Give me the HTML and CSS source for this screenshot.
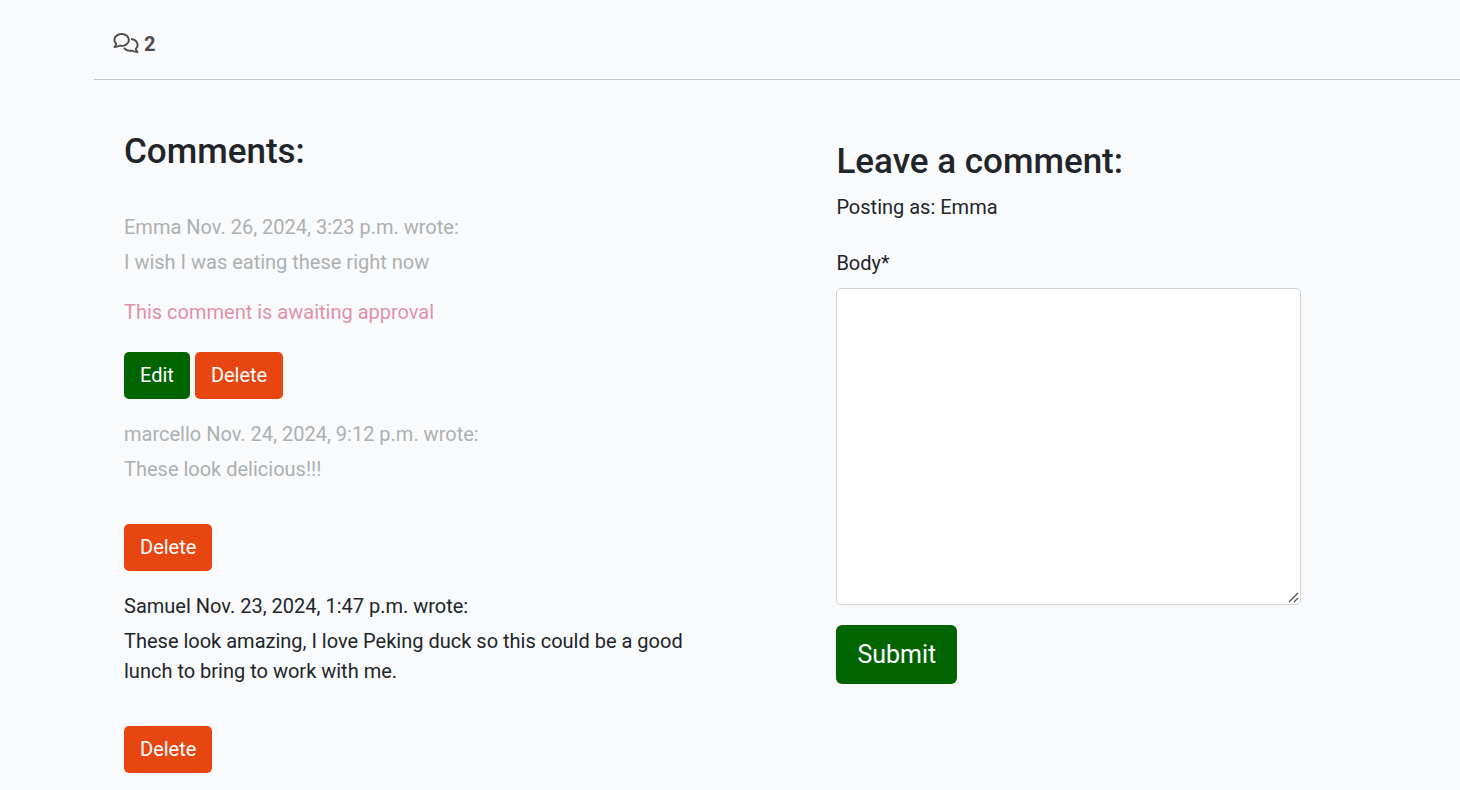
FILE: index.html
```html
<!DOCTYPE html>
<html lang="en">
<head>
<meta charset="utf-8">
<meta name="viewport" content="width=device-width, initial-scale=1">
<title>Comments</title>
<link rel="stylesheet" href="styles.css">
</head>
<body>
<main class="post">
  <div class="comment-count">
    <svg class="count-icon" viewBox="0 0 640 512" aria-hidden="true"><path d="M88.2 309.1c9.8-18.3 6.8-40.8-7.5-55.8C59.4 230.9 48 204 48 176c0-63.5 63.8-128 160-128s160 64.5 160 128s-63.8 128-160 128c-13.1 0-25.8-1.3-37.8-3.6c-10.4-2-21.2-.6-30.7 4.2c-4.1 2.1-8.3 4.1-12.6 6c-16 7.2-32.9 13.5-49.9 18c2.8-4.6 5.4-9.1 7.9-13.6c1.1-1.9 2.2-3.9 3.2-5.9zM208 352c114.9 0 208-78.8 208-176S322.9 0 208 0S0 78.8 0 176c0 41.8 17.2 80.1 45.9 110.3c-.9 1.7-1.9 3.5-2.8 5.1c-10.3 18.4-22.3 36.5-36.6 52.1c-6.6 7-8.3 17.2-4.6 25.9C5.8 378.3 14.4 384 24 384c43 0 86.5-13.3 122.7-29.7c4.8-2.2 9.6-4.5 14.2-6.8c15.1 3 30.9 4.5 47.1 4.5zM432 480c16.2 0 31.9-1.6 47.1-4.5c4.6 2.3 9.4 4.6 14.2 6.8C529.5 498.7 573 512 616 512c9.6 0 18.2-5.7 22-14.5c3.8-8.8 2-19-4.6-25.9c-14.2-15.6-26.2-33.7-36.6-52.1c-.9-1.7-1.9-3.4-2.8-5.1C622.8 384.1 640 345.8 640 304c0-94.4-87.9-171.5-198.2-175.8c4.1 15.2 6.2 31.2 6.2 47.8l0 .6c87.2 6.7 144 67.5 144 127.4c0 28-11.4 54.9-32.7 77.2c-14.3 15-17.3 37.6-7.5 55.8c1.1 2 2.2 4 3.2 5.9c2.5 4.5 5.2 9 7.9 13.6c-17-4.5-33.9-10.7-49.9-18c-4.3-1.9-8.5-3.9-12.6-6c-9.5-4.8-20.3-6.2-30.7-4.2c-12.1 2.4-24.8 3.6-37.8 3.6c-61.7 0-110-26.5-136.8-62.3c-16 5.4-32.8 9.4-50 11.8C279 439.8 350 480 432 480z"/></svg>
    <strong>2</strong>
  </div>
  <div class="columns">
    <section class="comments">
      <h3 class="title">Comments:</h3>
      <article class="comment">
        <div class="faded">
          <p class="meta">Emma Nov. 26, 2024, 3:23 p.m. wrote:</p>
          <p class="text">I wish I was eating these right now</p>
          <p class="approval">This comment is awaiting approval</p>
        </div>
        <div class="actions actions-near">
          <button class="btn btn-edit" type="button">Edit</button>
          <button class="btn btn-delete" type="button">Delete</button>
        </div>
      </article>
      <article class="comment">
        <div class="faded">
          <p class="meta">marcello Nov. 24, 2024, 9:12 p.m. wrote:</p>
          <p class="text">These look delicious!!!</p>
        </div>
        <div class="actions">
          <button class="btn btn-delete" type="button">Delete</button>
        </div>
      </article>
      <article class="comment">
        <p class="meta">Samuel Nov. 23, 2024, 1:47 p.m. wrote:</p>
        <p class="text">These look amazing, I love Peking duck so this could be a good lunch to bring to work with me.</p>
        <div class="actions">
          <button class="btn btn-delete" type="button">Delete</button>
        </div>
      </article>
    </section>
    <section class="leave">
      <h3 class="title">Leave a comment:</h3>
      <p class="posting">Posting as: Emma</p>
      <form class="form">
        <label class="label" for="body">Body*</label>
        <div class="field-wrap">
          <textarea class="field" id="body" name="body" rows="10" required></textarea>
          <svg class="grip" viewBox="0 0 11 11" aria-hidden="true"><path d="M1 10L10 1M6 10L10 6"/></svg>
        </div>
        <button class="btn btn-submit" type="submit">Submit</button>
      </form>
    </section>
  </div>
</main>
</body>
</html>
```

FILE: styles.css
```css
* {
  box-sizing: border-box;
}

body {
  margin: 0;
  background: #f9fafc;
  color: #212529;
  font: 400 20px/30px Roboto, "Liberation Sans", sans-serif;
}

h3,
p {
  margin: 0;
}

.post {
  margin-left: 94px;
}

.comment-count {
  padding: 29px 19px 20px;
  border-bottom: 1px solid #c0c2c6;
  color: #4a4a4f;
}

.count-icon {
  width: 26px;
  height: 20px;
  vertical-align: -2px;
  fill: currentColor;
}

.columns {
  display: grid;
  grid-template-columns: 9fr 7fr;
  gap: 115px;
  padding: 50px 159px 16px 30px;
}

.title {
  font-size: 35px;
  font-weight: 500;
  line-height: 44px;
}

.comments .title {
  margin-bottom: 38px;
}

.comment {
  margin-bottom: 20px;
}

.comment:last-child {
  margin-bottom: 0;
}

.faded {
  color: #adb0b1;
}

.text {
  margin-top: 5px;
}

.approval {
  margin-top: 20px;
  color: #e091a8;
}

.actions {
  display: flex;
  gap: 5px;
  margin-top: 40px;
}

.actions-near {
  margin-top: 25px;
}

.btn {
  padding: 8px 16px;
  border: 0;
  border-radius: 5px;
  color: #fff;
  font: inherit;
  line-height: 31px;
  cursor: pointer;
}

.btn-edit,
.btn-submit {
  background: #006400;
}

.btn-delete {
  background: #e84610;
}

.leave {
  padding-top: 10px;
}

.posting {
  margin: 8px 0 26px;
}

.form {
  display: flex;
  flex-direction: column;
  align-items: flex-start;
}

.label {
  margin-bottom: 10px;
}

.field-wrap {
  position: relative;
  width: 100%;
}

.field {
  display: block;
  width: 100%;
  padding: 8px 15px 7px;
  border: 1px solid #ced4da;
  border-radius: 5px;
  background: #fff;
  color: inherit;
  font: inherit;
  resize: vertical;
}

.field::-webkit-resizer {
  background: transparent;
}

.grip {
  position: absolute;
  right: 2px;
  bottom: 2px;
  width: 11px;
  height: 11px;
  fill: none;
  stroke: #55555a;
  stroke-width: 1.4;
  pointer-events: none;
}

.btn-submit {
  margin-top: 20px;
  padding: 14px 21px;
  border-radius: 6px;
  font-size: 25px;
}
```
